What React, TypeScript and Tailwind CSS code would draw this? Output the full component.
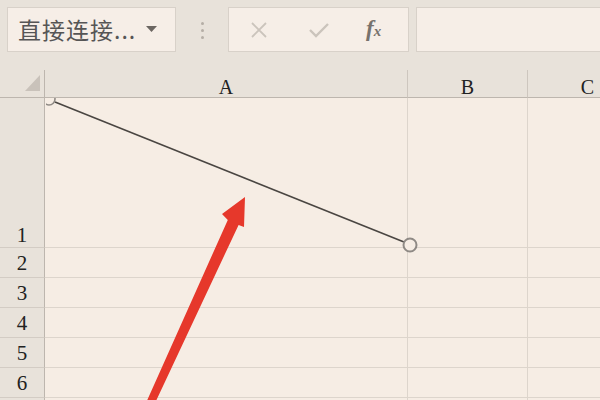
import React from "react";

const rowsSmall = ["2", "3", "4", "5", "6"];

export default function App() {
  return (
    <div className="relative w-[600px] h-[400px] overflow-hidden bg-[#e8e2da]" style={{ fontFamily: '"Liberation Sans", sans-serif' }}>
      {/* Toolbar */}
      <div className="flex items-start h-[62px] pt-[7px] pl-[7px]">
        <div className="flex items-center w-[169px] h-[45px] bg-[#f6eee7] border border-[#d8d1c9] pl-[10px]">
          <span className="text-[23px] text-[#555] tracking-[1px]" style={{ fontFamily: '"Noto Sans CJK SC", sans-serif' }}>直接连接...</span>
          <svg className="ml-[10px]" width="11" height="7" viewBox="0 0 11 7"><path d="M0 0 L11 0 L5.5 6 Z" fill="#6b6661" /></svg>
        </div>
        <div className="flex flex-col items-center gap-[4px] ml-[24px] mt-[15px] w-[4px]">
          <div className="w-[3px] h-[3px] rounded-full bg-[#b5aea6]" />
          <div className="w-[3px] h-[3px] rounded-full bg-[#b5aea6]" />
          <div className="w-[3px] h-[3px] rounded-full bg-[#b5aea6]" />
        </div>
        <div className="flex items-center w-[181px] h-[45px] ml-[24px] bg-[#f6eee7] border border-[#d8d1c9]">
          <svg className="ml-[21px]" width="18" height="18" viewBox="0 0 18 18"><path d="M2 2 L16 16 M16 2 L2 16" stroke="#cbc4bc" strokeWidth="1.8" /></svg>
          <svg className="ml-[40px]" width="22" height="18" viewBox="0 0 22 18"><path d="M2 9 L8 15 L20 3" stroke="#cbc4bc" strokeWidth="2.4" fill="none" /></svg>
          <span className="ml-[36px] text-[23px] italic font-bold text-[#77726d]" style={{ fontFamily: '"Liberation Serif", serif' }}>f<span className="text-[15px]">x</span></span>
        </div>
        <div className="flex-1 h-[45px] ml-[7px] bg-[#f6eee7] border border-[#d8d1c9] border-r-0" />
      </div>

      {/* Grid */}
      <div className="grid grid-cols-[45px_363px_120px_120px] grid-rows-[8px_28px_150px_30px_30px_30px_30px_30px_30px]" style={{ fontFamily: '"Liberation Serif", serif' }}>
        <div className="col-span-4" />
        <div className="relative border-r border-r-[#bdb6ae] border-b border-b-[#bdb6ae] bg-[#e8e2da]">
          <svg className="absolute left-[25px] top-[5px]" width="15" height="16" viewBox="0 0 15 16"><path d="M15 0 L15 16 L0 16 Z" fill="#c9c2ba" /></svg>
        </div>
        <div className="flex items-center justify-center pt-[6px] border-r border-r-[#cdc6be] border-b border-b-[#bdb6ae] text-[20px] text-[#222]">A</div>
        <div className="flex items-center justify-center pt-[6px] border-r border-r-[#cdc6be] border-b border-b-[#bdb6ae] text-[20px] text-[#222]">B</div>
        <div className="flex items-center justify-center pt-[6px] border-r border-r-[#cdc6be] border-b border-b-[#bdb6ae] text-[20px] text-[#222]">C</div>

        <div className="flex items-end justify-center pb-0 leading-[24px] border-r border-r-[#bdb6ae] border-b border-b-[#d3ccc4] bg-[#e8e2da] text-[21px] text-[#222]">1</div>
        <div className="bg-[#f6ede4] border-r border-r-[#ddd5cc] border-b border-b-[#ddd5cc]" />
        <div className="bg-[#f6ede4] border-r border-r-[#ddd5cc] border-b border-b-[#ddd5cc]" />
        <div className="bg-[#f6ede4] border-r border-r-[#ddd5cc] border-b border-b-[#ddd5cc]" />

        {rowsSmall.map((n) => (
          <React.Fragment key={n}>
            <div className="flex items-center justify-center pt-[3px] border-r border-r-[#bdb6ae] border-b border-b-[#d3ccc4] bg-[#e8e2da] text-[21px] text-[#222]">{n}</div>
            <div className="bg-[#f6ede4] border-r border-r-[#ddd5cc] border-b border-b-[#ddd5cc]" />
            <div className="bg-[#f6ede4] border-r border-r-[#ddd5cc] border-b border-b-[#ddd5cc]" />
            <div className="bg-[#f6ede4] border-r border-r-[#ddd5cc] border-b border-b-[#ddd5cc]" />
          </React.Fragment>
        ))}
        <div className="border-r border-r-[#bdb6ae] bg-[#e8e2da]" />
        <div className="bg-[#f6ede4] border-r border-r-[#ddd5cc]" />
        <div className="bg-[#f6ede4] border-r border-r-[#ddd5cc]" />
        <div className="bg-[#f6ede4] border-r border-r-[#ddd5cc]" />
      </div>

      <svg className="absolute left-0 top-0 pointer-events-none" width="600" height="400" viewBox="0 0 600 400">
        <defs>
          <clipPath id="cells">
            <rect x="46" y="98" width="554" height="302" />
          </clipPath>
        </defs>
        <g clipPath="url(#cells)">
          <line x1="55" y1="102" x2="404" y2="242" stroke="#4a4642" strokeWidth="1.6" />
          <circle cx="49" cy="99" r="6" fill="#f6ede4" stroke="#8f8a85" strokeWidth="1.6" />
          <circle cx="410" cy="245" r="6.5" fill="#f6ede4" stroke="#8f8a85" strokeWidth="2" />
        </g>
        <polygon
          points="245,197 244,227 238.6,224.9 154.6,404 146.4,402 227.8,219.9 222,214"
          fill="#e6382b"
        />
      </svg>
    </div>
  );
}
